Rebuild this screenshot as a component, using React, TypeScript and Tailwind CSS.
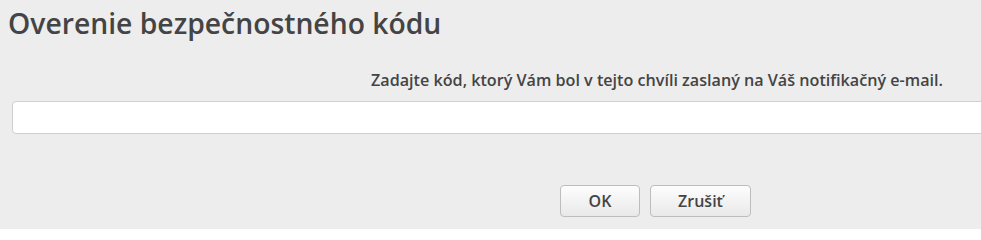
export default function App() {
  return (
    <div
      className="w-[981px] h-[229px] overflow-hidden bg-[#ededee] text-[#444]"
      style={{ fontFamily: '"Open Sans", sans-serif' }}
    >
      <h1 className="pl-[8px] pt-[4px] text-[28.3px] leading-[38px] font-semibold">
        Overenie bezpečnostného kódu
      </h1>

      <div className="w-[1300px] pl-[12px]">
        <div className="flex w-[931px] justify-end pt-[28px] text-[16.15px] leading-[20px] font-semibold">
          Zadajte kód, ktorý Vám bol v tejto chvíli zaslaný na Váš notifikačný e-mail.
        </div>
        <input
          type="text"
          className="mt-[11px] block h-[33px] w-[1290px] rounded-[4px] border border-[#cfcfcf] bg-white px-2 outline-none"
        />
        <div className="flex w-[931px] pt-[51px] pl-[548px] gap-[10px]">
          <button className="h-[32px] w-[80px] rounded-[4px] border border-[#bdbdbd] bg-gradient-to-b from-[#fdfdfd] to-[#e9e9e9] text-[16px] font-semibold text-[#444]">
            OK
          </button>
          <button className="h-[32px] w-[101px] rounded-[4px] border border-[#bdbdbd] bg-gradient-to-b from-[#fdfdfd] to-[#e9e9e9] text-[16px] font-semibold text-[#444]">
            Zrušiť
          </button>
        </div>
      </div>
    </div>
  );
}
